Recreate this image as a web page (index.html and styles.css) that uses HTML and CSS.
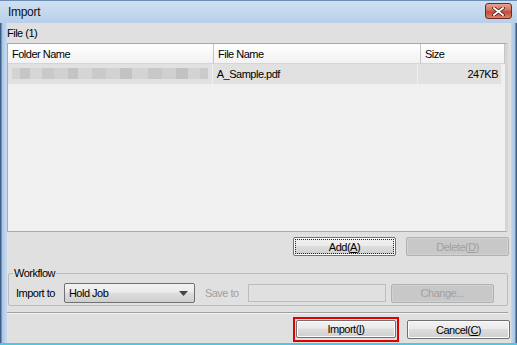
FILE: index.html
```html
<!DOCTYPE html>
<html lang="en">

<head>
    <title>Import</title>
    <link rel="stylesheet" href="styles.css">
</head>

<body>
    <div class="window">
        <div class="titlebar">
            <span class="title">Import</span>
            <button class="close" type="button" aria-label="Close">
                <svg width="13" height="9" viewBox="0 0 13 9">
                    <path d="M2 1 L11 8 M11 1 L2 8" stroke="#4a1510" stroke-width="3.4" stroke-linecap="square" />
                    <path d="M2 1 L11 8 M11 1 L2 8" stroke="#ffffff" stroke-width="1.8" stroke-linecap="square" />
                </svg>
            </button>
        </div>

        <div class="client">
            <div class="caption">File (1)</div>

            <div class="list">
                <div class="row head">
                    <div class="cell c-folder">Folder Name</div>
                    <div class="cell c-file">File Name</div>
                    <div class="cell c-size">Size</div>
                </div>
                <div class="row item">
                    <div class="cell c-folder"><div class="blur"></div></div>
                    <div class="cell c-file">A_Sample.pdf</div>
                    <div class="cell c-size num">247KB</div>
                </div>
            </div>

            <div class="actions">
                <button type="button" class="btn focus">Add(<u>A</u>)</button>
                <button type="button" class="btn" disabled>Delete(<u>D</u>)</button>
            </div>

            <fieldset class="workflow">
                <legend>Workflow</legend>
                <label class="lbl">Import to</label>
                <div class="combo">
                    <span>Hold Job</span>
                    <svg width="9" height="5" viewBox="0 0 9 5"><path d="M0 0 H9 L4.5 5 Z" fill="#444" /></svg>
                </div>
                <label class="lbl off">Save to</label>
                <div class="field"></div>
                <button type="button" class="btn change" disabled>Change...</button>
            </fieldset>

            <div class="sep"></div>

            <div class="footer">
                <div class="mark"><button type="button" class="btn">Import(<u>I</u>)</button></div>
                <button type="button" class="btn">Cancel(<u>C</u>)</button>
            </div>
        </div>
    </div>
</body>

</html>
```

FILE: styles.css
```css
:root {
    font-family: "Liberation Sans", Arial, sans-serif;
    font-size: 11px;
    color: #000;
}

body {
    margin: 0;
    width: 517px;
    height: 345px;
    overflow: hidden;
}

.window {
    width: 517px;
    height: 345px;
    box-sizing: border-box;
    display: flex;
    flex-direction: column;
    background: linear-gradient(to right, #3d5f86 0, #3d5f86 1px, #a8c4e4 2px, #c3d7ef 6px, #c3d7ef 511px, #a8c4e4 515px, #3d5f86 516px);
    border-bottom: 2px solid #4fc6e6;
}

.titlebar {
    height: 23px;
    display: flex;
    align-items: center;
    justify-content: space-between;
    padding: 0 5px 0 8px;
    background: linear-gradient(#d0e0f2, #b8cfea);
    border-top: 1px solid #6b8cb3;
    box-sizing: border-box;
}

.title {
    font-size: 12px;
    letter-spacing: -0.3px;
    color: #111;
}

.close {
    width: 27px;
    height: 16px;
    margin-top: -2px;
    padding: 0;
    border: 1px solid #6e2a22;
    border-radius: 3px;
    background: linear-gradient(#e7a496, #d3705c 45%, #c24a34 55%, #d8826c);
    display: flex;
    align-items: center;
    justify-content: center;
}

.client {
    flex: 1;
    margin: 0 6px 0 7px;
    background: #e0e0e0;
    display: flex;
    flex-direction: column;
    letter-spacing: -0.5px;
}

.caption {
    height: 20px;
    line-height: 20px;
}

.list {
    height: 189px;
    background: #f0f0f0;
    border: 1px solid #a9a9a9;
    border-right: 3px solid #d6d6d6;
    box-sizing: border-box;
    margin-right: 3px;
}

.row {
    display: flex;
    height: 20px;
}

.row.head {
    background: linear-gradient(#ffffff, #f1f1f1);
}

.row.head .cell {
    border-right: 1px solid #c5c5c5;
    border-bottom: 1px solid #d5d5d5;
}

.row.item {
    background: #e1e1e1;
    margin-right: 3px;
}

.row.item .cell {
    border-right: 1px solid #f0f0f0;
}

.cell {
    box-sizing: border-box;
    padding: 0 4px;
    line-height: 20px;
    white-space: nowrap;
    overflow: hidden;
}

.c-folder {
    width: 206px;
}

.c-file {
    width: 207px;
}

.c-size {
    width: 84px;
}

.num {
    text-align: right;
    padding-right: 3px;
}

.blur {
    margin-top: 4px;
    height: 11px;
    width: 196px;
    background:
        linear-gradient(to right, #d3d3d3 0 8px, #c6c6c6 8px 18px, #d6d6d6 18px 30px, #c9c9c9 30px 42px, #d1d1d1 42px 56px, #c4c4c4 56px 66px, #d5d5d5 66px 80px, #cacaca 80px 94px, #d2d2d2 94px 108px, #c3c3c3 108px 120px, #d4d4d4 120px 136px, #c8c8c8 136px 150px, #d0d0d0 150px 164px, #c2c2c2 164px 176px, #d3d3d3 176px 188px, #cbcbcb 188px 196px);
}

.actions {
    display: flex;
    justify-content: flex-end;
    gap: 10px;
    padding: 5px 2px 0 0;
}

.btn {
    width: 103px;
    height: 19px;
    padding: 0;
    font: inherit;
    letter-spacing: -0.5px;
    color: #000;
    border: 1px solid #707070;
    border-radius: 2px;
    background: linear-gradient(#f2f2f2, #ebebeb 45%, #dddddd 50%, #cfcfcf);
    box-shadow: inset 0 0 0 1px #fcfcfc;
}

.btn.focus {
    border-color: #3c7fb1;
    outline: 1px dotted #222;
    outline-offset: -3px;
}

.btn:disabled {
    color: #a0a0a0;
    border-color: #adb2b5;
    background: #c8c8c8;
    box-shadow: inset 0 0 0 1px #d2d2d2;
}

.workflow {
    margin: 11px 3px 0 1px;
    padding: 4px 8px 5px 7px;
    height: 39px;
    box-sizing: border-box;
    border: 1px solid #bcbcbc;
    border-radius: 2px;
    display: flex;
    align-items: center;
}

.workflow legend {
    padding: 0 1px;
    margin-left: -3px;
}

.lbl {
    margin-right: 9px;
}

.lbl.off {
    color: #a0a0a0;
    margin-left: 10px;
}

.combo {
    width: 131px;
    height: 20px;
    box-sizing: border-box;
    border: 1px solid #707070;
    border-radius: 2px;
    background: linear-gradient(#f2f2f2, #ebebeb 45%, #dddddd 50%, #cfcfcf);
    display: flex;
    align-items: center;
    justify-content: space-between;
    padding: 0 6px 0 4px;
}

.field {
    width: 138px;
    height: 18px;
    border: 1px solid #bdbdbd;
    box-sizing: border-box;
    margin-right: 5px;
}

.btn.change {
    height: 19px;
}

.sep {
    margin: 6px 3px 0 0;
    border-top: 1px solid #a0a0a0;
    border-bottom: 1px solid #f4f4f4;
}

.footer {
    display: flex;
    justify-content: flex-end;
    align-items: center;
    gap: 8px;
    padding: 3px 1px 0 0;
}

.mark {
    border: 2px solid #e00000;
    padding: 1px 1px 0 1px;
    height: 20px;
}

.mark .btn {
    width: 100px;
    height: 18px;
}
```
